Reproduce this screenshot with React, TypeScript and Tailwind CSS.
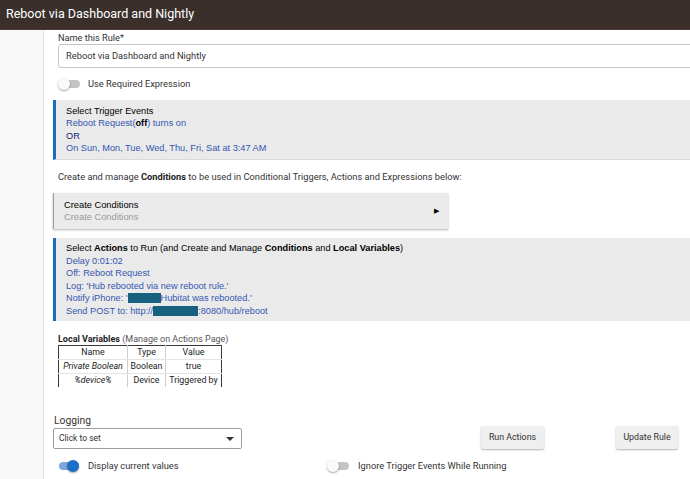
import React from "react";

function Toggle({ on }: { on?: boolean }) {
  return (
    <div className="relative w-[22px] h-[12px] shrink-0">
      <div
        className={
          "absolute left-[2px] right-0 top-[2px] h-[8px] rounded-full " +
          (on ? "bg-[#7fa8da]" : "bg-[#c4c4c4]")
        }
      />
      <div
        className={
          "absolute top-0 w-[12px] h-[12px] rounded-full shadow-[0_1px_2px_rgba(0,0,0,0.35)] " +
          (on ? "right-0 bg-[#1c6fc6]" : "left-0 bg-[#fafafa]")
        }
      />
    </div>
  );
}

function Redact({ w }: { w: number }) {
  return (
    <span
      className="inline-block align-middle h-[10px] bg-[#17607f] -mt-[2px]"
      style={{ width: w }}
    />
  );
}

export default function App() {
  const blue = "text-[#3556b0]";
  return (
    <div className="w-[690px] h-[479px] overflow-hidden bg-white font-['Roboto',sans-serif] text-[#222]">
      <header className="h-[30px] bg-[#3a2f2b] border-b border-[#4a3a35] text-white text-[12.5px] pl-[6px] flex items-center">
        Reboot via Dashboard and Nightly
      </header>
      <div className="flex">
        <aside className="w-[44px] h-[449px] shrink-0 bg-[#f8f8f8] border-r border-[#e6e6e6]" />
        <main className="pl-[9px] pt-[1px] w-[720px] shrink-0">
          <div className="pl-[5px] text-[9.2px] leading-[13px] text-[#333]">Name this Rule*</div>
          <div className="ml-[5px] h-[24px] border border-[#c6c6c6] rounded-[3px] pl-[7px] flex items-center text-[9.3px] text-[#333]">
            Reboot via Dashboard and Nightly
          </div>
          <div className="mt-[6px] h-[20px] pl-[5px] flex items-center gap-[8px] text-[9.3px] text-[#333]">
            <Toggle />
            <span>Use Required Expression</span>
          </div>

          <div className="mt-[6px] h-[60px] bg-[#eaeaea] border-l-[3px] border-[#1d6db8] border-b border-b-[#dadada] pl-[10px] pt-[5px] font-['Liberation_Sans',Arial,sans-serif] text-[9.2px] leading-[12.4px]">
            <div className="text-black">Select Trigger Events</div>
            <div className={blue}>
              Reboot Request(<b className="text-black">off</b>) turns on
            </div>
            <div className="text-[#15157a]">OR</div>
            <div className={blue}>On Sun, Mon, Tue, Wed, Thu, Fri, Sat at 3:47 AM</div>
          </div>

          <div className="mt-[11px] pl-[5px] text-[9.3px] leading-[12px] text-[#333]">
            Create and manage <b className="font-bold text-[#222]">Conditions</b> to be used in Conditional Triggers, Actions and Expressions below:
          </div>

          <div className="mt-[10px] w-[395px] h-[36px] bg-[#ebebeb] border-l border-[#9a9a9a] shadow-[0_1px_2px_rgba(0,0,0,0.3)] pl-[10px] pr-[9px] flex items-center justify-between font-['Liberation_Sans',Arial,sans-serif] text-[9.3px] leading-[12px]">
            <div>
              <div className="text-black">Create Conditions</div>
              <div className="text-[#9a9a9a]">Create Conditions</div>
            </div>
            <span className="text-[7px] text-black">▶</span>
          </div>

          <div className="mt-[9px] h-[83px] bg-[#eaeaea] border-l-[3px] border-[#1d6db8] pl-[10px] pt-[4px] font-['Liberation_Sans',Arial,sans-serif] text-[9.2px] leading-[12.6px]">
            <div className="text-black">
              Select <b>Actions</b> to Run (and Create and Manage <b>Conditions</b> and <b>Local Variables</b>)
            </div>
            <div className={blue}>Delay 0:01:02</div>
            <div className={blue}>Off: Reboot Request</div>
            <div className={blue}>Log: 'Hub rebooted via new reboot rule.'</div>
            <div className={blue}>
              Notify iPhone: '<Redact w={33} />Hubitat was rebooted.'
            </div>
            <div className={blue}>
              Send POST to: http://<Redact w={45} />:8080/hub/reboot
            </div>
          </div>

          <div className="mt-[12px] pl-[5px] text-[9px] leading-[12px]">
            <div>
              <b className="font-bold text-[#222]">Local Variables</b>{" "}
              <span className="text-[#555]">(Manage on Actions Page)</span>
            </div>
            <table className="border-collapse text-[8.8px] leading-[13px] text-[#222] text-center">
              <tbody>
                <tr>
                  <td className="w-[69px] border-t border-l border-[#3a3a3a] border-r border-r-[#cfcfcf] border-b border-b-[#e4e4e4]">Name</td>
                  <td className="w-[38px] border-t border-[#3a3a3a] border-r border-r-[#cfcfcf] border-b border-b-[#e4e4e4]">Type</td>
                  <td className="w-[56px] border-t border-r border-[#3a3a3a] border-b border-b-[#e4e4e4]">Value</td>
                </tr>
                <tr>
                  <td className="border-l border-[#3a3a3a] border-r border-r-[#cfcfcf] border-b border-b-[#e4e4e4] italic">Private Boolean</td>
                  <td className="border-r border-[#cfcfcf] border-b border-b-[#e4e4e4]">Boolean</td>
                  <td className="border-r border-[#3a3a3a] border-b border-b-[#e4e4e4]">true</td>
                </tr>
                <tr>
                  <td className="border-l border-[#3a3a3a] border-r border-r-[#cfcfcf] italic">%device%</td>
                  <td className="border-r border-[#cfcfcf]">Device</td>
                  <td className="border-r border-[#3a3a3a]">Triggered by</td>
                </tr>
              </tbody>
            </table>
          </div>

          <div className="mt-[27px] flex items-end">
            <div className="w-[189px]">
              <div className="pl-[1px] text-[10.3px] leading-[13px] text-[#333]">Logging</div>
              <div className="mt-[1px] h-[21px] border border-[#9e9e9e] rounded-[2px] pl-[5px] pr-[7px] flex items-center justify-between text-[8.5px] text-[#333]">
                <span>Click to set</span>
                <span className="w-0 h-0 border-l-[4px] border-r-[4px] border-t-[4px] border-l-transparent border-r-transparent border-t-[#333]" />
              </div>
            </div>
            <button className="ml-[239px] w-[63px] h-[23px] bg-[#efefef] rounded-[2px] shadow-[0_1px_2px_rgba(0,0,0,0.3)] text-[8.8px] text-[#333]">
              Run Actions
            </button>
            <button className="ml-[72px] w-[62px] h-[23px] bg-[#efefef] rounded-[2px] shadow-[0_1px_2px_rgba(0,0,0,0.3)] text-[8.8px] text-[#333]">
              Update Rule
            </button>
          </div>

          <div className="mt-[10px] flex items-center text-[9.3px] text-[#333]">
            <div className="w-[274px] pl-[4px] flex items-center gap-[9px]">
              <Toggle on />
              <span>Display current values</span>
            </div>
            <div className="flex items-center gap-[9px]">
              <Toggle />
              <span>Ignore Trigger Events While Running</span>
            </div>
          </div>
        </main>
      </div>
    </div>
  );
}
